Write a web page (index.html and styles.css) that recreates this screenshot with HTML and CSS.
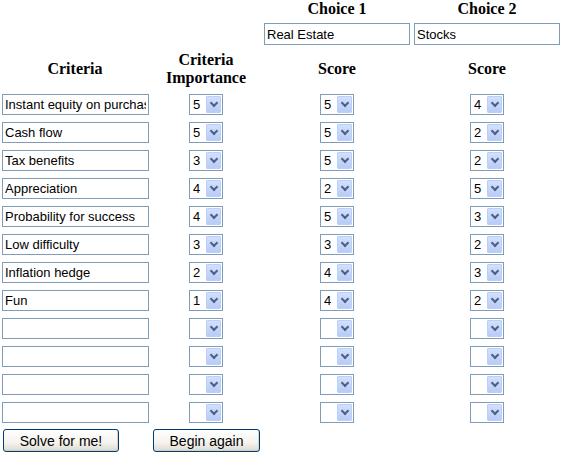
FILE: index.html
```html
<!DOCTYPE html>
<html lang="en">
<head>
  <meta charset="UTF-8" />
  <title>Decision Matrix</title>
  <link rel="stylesheet" href="styles.css">
</head>
<body>
  <form class="matrix" onsubmit="return false;">
    <div class="row head-row">
      <span></span><span></span>
      <div class="head">Choice 1</div>
      <div class="head">Choice 2</div>
    </div>
    <div class="row choice-row">
      <span></span><span></span>
      <input class="field choice" type="text" value="Real Estate">
      <input class="field choice" type="text" value="Stocks">
    </div>
    <div class="row col-head">
      <div class="head">Criteria</div>
      <div class="head">Criteria<br>Importance</div>
      <div class="head">Score</div>
      <div class="head">Score</div>
    </div>

    <div class="rows">
      <div class="row item">
        <input class="field crit" type="text" value="Instant equity on purchase">
        <span class="pick"><span class="val">5</span><span class="arrow"></span></span>
        <span class="pick"><span class="val">5</span><span class="arrow"></span></span>
        <span class="pick"><span class="val">4</span><span class="arrow"></span></span>
      </div>
      <div class="row item">
        <input class="field crit" type="text" value="Cash flow">
        <span class="pick"><span class="val">5</span><span class="arrow"></span></span>
        <span class="pick"><span class="val">5</span><span class="arrow"></span></span>
        <span class="pick"><span class="val">2</span><span class="arrow"></span></span>
      </div>
      <div class="row item">
        <input class="field crit" type="text" value="Tax benefits">
        <span class="pick"><span class="val">3</span><span class="arrow"></span></span>
        <span class="pick"><span class="val">5</span><span class="arrow"></span></span>
        <span class="pick"><span class="val">2</span><span class="arrow"></span></span>
      </div>
      <div class="row item">
        <input class="field crit" type="text" value="Appreciation">
        <span class="pick"><span class="val">4</span><span class="arrow"></span></span>
        <span class="pick"><span class="val">2</span><span class="arrow"></span></span>
        <span class="pick"><span class="val">5</span><span class="arrow"></span></span>
      </div>
      <div class="row item">
        <input class="field crit" type="text" value="Probability for success">
        <span class="pick"><span class="val">4</span><span class="arrow"></span></span>
        <span class="pick"><span class="val">5</span><span class="arrow"></span></span>
        <span class="pick"><span class="val">3</span><span class="arrow"></span></span>
      </div>
      <div class="row item">
        <input class="field crit" type="text" value="Low difficulty">
        <span class="pick"><span class="val">3</span><span class="arrow"></span></span>
        <span class="pick"><span class="val">3</span><span class="arrow"></span></span>
        <span class="pick"><span class="val">2</span><span class="arrow"></span></span>
      </div>
      <div class="row item">
        <input class="field crit" type="text" value="Inflation hedge">
        <span class="pick"><span class="val">2</span><span class="arrow"></span></span>
        <span class="pick"><span class="val">4</span><span class="arrow"></span></span>
        <span class="pick"><span class="val">3</span><span class="arrow"></span></span>
      </div>
      <div class="row item">
        <input class="field crit" type="text" value="Fun">
        <span class="pick"><span class="val">1</span><span class="arrow"></span></span>
        <span class="pick"><span class="val">4</span><span class="arrow"></span></span>
        <span class="pick"><span class="val">2</span><span class="arrow"></span></span>
      </div>
      <div class="row item">
        <input class="field crit" type="text" value="">
        <span class="pick"><span class="val"></span><span class="arrow"></span></span>
        <span class="pick"><span class="val"></span><span class="arrow"></span></span>
        <span class="pick"><span class="val"></span><span class="arrow"></span></span>
      </div>
      <div class="row item">
        <input class="field crit" type="text" value="">
        <span class="pick"><span class="val"></span><span class="arrow"></span></span>
        <span class="pick"><span class="val"></span><span class="arrow"></span></span>
        <span class="pick"><span class="val"></span><span class="arrow"></span></span>
      </div>
      <div class="row item">
        <input class="field crit" type="text" value="">
        <span class="pick"><span class="val"></span><span class="arrow"></span></span>
        <span class="pick"><span class="val"></span><span class="arrow"></span></span>
        <span class="pick"><span class="val"></span><span class="arrow"></span></span>
      </div>
      <div class="row item">
        <input class="field crit" type="text" value="">
        <span class="pick"><span class="val"></span><span class="arrow"></span></span>
        <span class="pick"><span class="val"></span><span class="arrow"></span></span>
        <span class="pick"><span class="val"></span><span class="arrow"></span></span>
      </div>
    </div>

    <div class="row actions">
      <button type="button" class="xp-btn solve">Solve for me!</button>
      <button type="button" class="xp-btn again">Begin again</button>
    </div>
  </form>
</body>
</html>
```

FILE: styles.css
```css
* {
  box-sizing: border-box;
}
html, body {
  margin: 0;
  padding: 0;
  background: #fff;
  color: #000;
}
.matrix {
  width: 565px;
}
.row {
  display: grid;
  grid-template-columns: 150px 112px 150px 150px;
  justify-items: center;
}
.head {
  font-family: "Liberation Serif", "Times New Roman", serif;
  font-weight: bold;
  font-size: 16px;
  line-height: 18px;
  text-align: center;
}
.head-row {
  height: 18px;
}
.choice-row {
  margin-top: 5px;
  height: 22px;
}
.col-head {
  margin-top: 6px;
  height: 36px;
  align-items: center;
}
.rows {
  margin-top: 7px;
  display: flex;
  flex-direction: column;
  gap: 7px;
}
.item {
  height: 21px;
}

/* text boxes */
.field {
  font-family: "Liberation Sans", Arial, sans-serif;
  font-size: 13px;
  color: #000;
  border: 1px solid #7f9db9;
  background: #fff;
  padding: 0 2px;
  margin: 0;
  outline: none;
  justify-self: start;
  margin-left: 2px;
}
.field.crit {
  width: 147px;
  height: 21px;
}
.field.choice {
  width: 146px;
  height: 22px;
}

/* xp style dropdowns */
.pick {
  display: flex;
  align-items: stretch;
  width: 34px;
  height: 21px;
  border: 1px solid #7f9db9;
  background: #fff;
  padding: 1px;
}
.pick .val {
  flex: 1;
  font-family: "Liberation Sans", Arial, sans-serif;
  font-size: 13px;
  line-height: 17px;
  padding-left: 2px;
}
.pick .arrow {
  width: 15px;
  display: flex;
  align-items: center;
  justify-content: center;
  border: 1px solid #bccff8;
  border-radius: 1px;
  background: linear-gradient(#d3e0fd, #b9ccf7);
}
.pick .arrow::after {
  content: "";
  width: 4px;
  height: 4px;
  border-right: 2px solid #4d6185;
  border-bottom: 2px solid #4d6185;
  transform: translateY(-2px) rotate(45deg);
}

/* buttons */
.actions {
  margin-top: 6px;
  height: 23px;
}
.xp-btn {
  justify-self: start;
  margin-left: 3px;
  height: 23px;
  padding: 0;
  font-family: "Liberation Sans", Arial, sans-serif;
  font-size: 14px;
  color: #000;
  border: 1px solid #003c74;
  border-radius: 3px;
  background: linear-gradient(#ffffff, #f4f3ee 60%, #e3e0d6 90%, #d6d0c5);
  box-shadow: inset -1px -1px 0 #d8d2c4;
  cursor: pointer;
}
.xp-btn.solve {
  width: 116px;
}
.xp-btn.again {
  width: 107px;
}
```
